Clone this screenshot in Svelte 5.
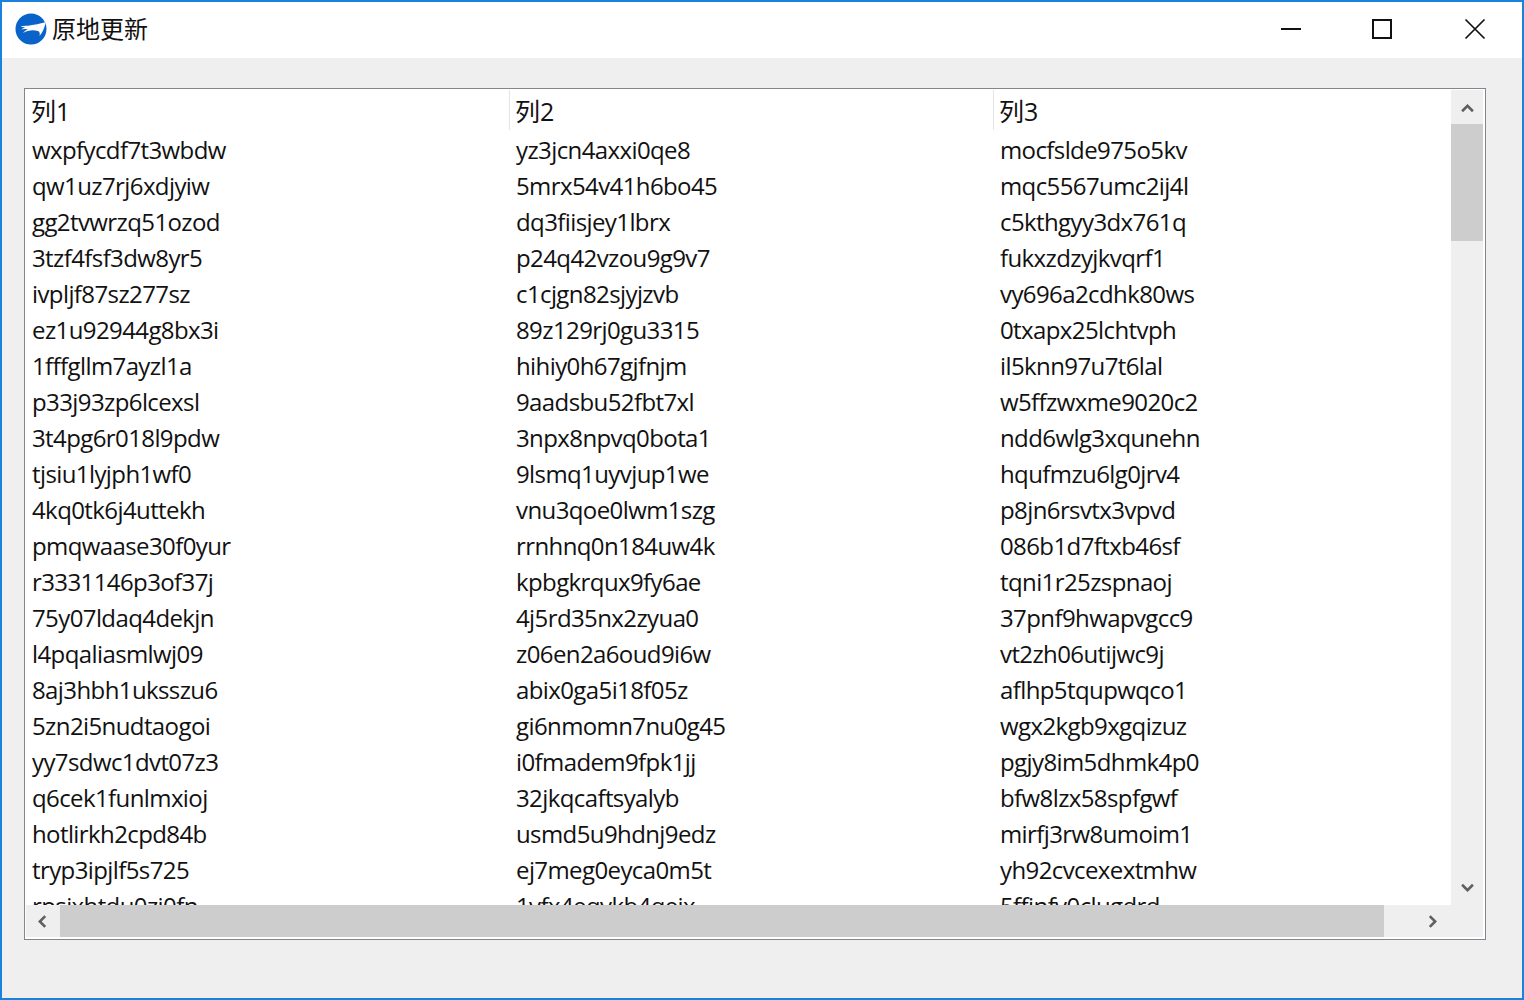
<script>
    const rows = `wxpfycdf7t3wbdw yz3jcn4axxi0qe8 mocfslde975o5kv
qw1uz7rj6xdjyiw 5mrx54v41h6bo45 mqc5567umc2ij4l
gg2tvwrzq51ozod dq3fiisjey1lbrx c5kthgyy3dx761q
3tzf4fsf3dw8yr5 p24q42vzou9g9v7 fukxzdzyjkvqrf1
ivpljf87sz277sz c1cjgn82sjyjzvb vy696a2cdhk80ws
ez1u92944g8bx3i 89z129rj0gu3315 0txapx25lchtvph
1fffgllm7ayzl1a hihiy0h67gjfnjm il5knn97u7t6lal
p33j93zp6lcexsl 9aadsbu52fbt7xl w5ffzwxme9020c2
3t4pg6r018l9pdw 3npx8npvq0bota1 ndd6wlg3xqunehn
tjsiu1lyjph1wf0 9lsmq1uyvjup1we hqufmzu6lg0jrv4
4kq0tk6j4uttekh vnu3qoe0lwm1szg p8jn6rsvtx3vpvd
pmqwaase30f0yur rrnhnq0n184uw4k 086b1d7ftxb46sf
r3331146p3of37j kpbgkrqux9fy6ae tqni1r25zspnaoj
75y07ldaq4dekjn 4j5rd35nx2zyua0 37pnf9hwapvgcc9
l4pqaliasmlwj09 z06en2a6oud9i6w vt2zh06utijwc9j
8aj3hbh1uksszu6 abix0ga5i18f05z aflhp5tqupwqco1
5zn2i5nudtaogoi gi6nmomn7nu0g45 wgx2kgb9xgqizuz
yy7sdwc1dvt07z3 i0fmadem9fpk1jj pgjy8im5dhmk4p0
q6cek1funlmxioj 32jkqcaftsyalyb bfw8lzx58spfgwf
hotlirkh2cpd84b usmd5u9hdnj9edz mirfj3rw8umoim1
tryp3ipjlf5s725 ej7meg0eyca0m5t yh92cvcexextmhw
rpsjxhtdu0zj0fn 1vfx4eqvkb4qejx 5ffjnfv0clugdrd`
        .split('\n')
        .map((line) => line.split(' '));
    const columns = ['列1', '列2', '列3'];
</script>

<div class="window">
    <header class="titlebar">
        <div class="title">
            <svg class="logo" viewBox="0 0 32 32" width="32" height="32">
                <circle cx="16" cy="16" r="15.5" fill="#0a63c8" />
                <path d="M6 13C12 13 18 12.500 30.500 9.300C30 14 28 19 24.500 23C25 20.500 25 19 23 18C18 16.500 13 17 8 20C9.500 18 11 17 13 16C10.500 16 8 16 6.500 16.500C7.500 15.500 8.500 15 10 14.500C8.500 14.300 7 14 6 13z" fill="#fff" />
            </svg>
            <span>原地更新</span>
        </div>
        <div class="controls">
            <button class="ctrl" aria-label="minimize">
                <svg viewBox="0 0 22 22" width="22" height="22"><path d="M0 11h20" stroke="#111" stroke-width="2" /></svg>
            </button>
            <button class="ctrl" aria-label="maximize">
                <svg viewBox="0 0 22 22" width="22" height="22"><rect x="2" y="2" width="18" height="18" fill="none" stroke="#111" stroke-width="2" /></svg>
            </button>
            <button class="ctrl close" aria-label="close">
                <svg viewBox="0 0 22 22" width="22" height="22"><path d="M1.500 1.500l19 19M20.500 1.500l-19 19" stroke="#111" stroke-width="1.700" /></svg>
            </button>
        </div>
    </header>

    <main class="content">
        <div class="grid-box">
            <div class="viewport">
                <div class="table-head">
                    {#each columns as col}
                        <div class="cell head">{col}</div>
                    {/each}
                </div>
                {#each rows as row}
                    <div class="row">
                        {#each row as value}
                            <div class="cell">{value}</div>
                        {/each}
                    </div>
                {/each}
            </div>

            <div class="vbar">
                <svg class="arrow up" viewBox="0 0 12 8" width="13" height="9"><path d="M1 6.500l5-5 5 5" fill="none" stroke="#606060" stroke-width="2.400" /></svg>
                <div class="track-v"><div class="thumb-v"></div></div>
                <svg class="arrow down" viewBox="0 0 12 8" width="13" height="9"><path d="M1 1.500l5 5 5-5" fill="none" stroke="#606060" stroke-width="2.400" /></svg>
            </div>

            <div class="hbar">
                <svg class="arrow left" viewBox="0 0 8 12" width="9" height="13"><path d="M6.500 1l-5 5 5 5" fill="none" stroke="#606060" stroke-width="2.400" /></svg>
                <div class="track-h"><div class="thumb-h"></div></div>
                <svg class="arrow right" viewBox="0 0 8 12" width="9" height="13"><path d="M1.500 1l5 5-5 5" fill="none" stroke="#606060" stroke-width="2.400" /></svg>
            </div>
            <div class="corner"></div>
        </div>
    </main>
</div>

<style>
    :global(body) {
        margin: 0;
    }

    .window {
        box-sizing: border-box;
        width: 1524px;
        height: 1000px;
        border: 2px solid #1a82dc;
        display: flex;
        flex-direction: column;
        background: #efefef;
        font-family: "Open Sans", "Noto Sans CJK SC", sans-serif;
        color: #111;
    }

    .titlebar {
        height: 56px;
        flex: none;
        background: #fff;
        display: flex;
        justify-content: space-between;
        align-items: center;
    }

    .title {
        display: flex;
        align-items: center;
        gap: 5px;
        padding-left: 13px;
        font-size: 24px;
        font-family: "Noto Sans CJK SC", sans-serif;
    }

    .title span {
        line-height: 32px;
        margin-top: -4px;
    }

    .logo {
        display: block;
        margin-top: -2px;
    }

    .controls {
        display: flex;
        align-items: center;
        gap: 68px;
        padding-right: 36px;
        padding-bottom: 2px;
    }

    .ctrl {
        padding: 0;
        border: 0;
        background: none;
        display: block;
        line-height: 0;
    }

    .close {
        margin-left: 3px;
    }

    .content {
        flex: 1;
        min-height: 0;
        padding: 30px 36px 58px 22px;
        display: flex;
    }

    .grid-box {
        flex: 1;
        box-sizing: border-box;
        background: #fff;
        border: 1px solid #82878f;
        padding: 1px 2px 2px 1px;
        display: grid;
        grid-template-columns: minmax(0, 1fr) 32px;
        grid-template-rows: minmax(0, 1fr) 32px;
        min-height: 0;
    }

    .viewport {
        overflow: hidden;
        min-height: 0;
        min-width: 0;
    }

    .table-head,
    .row {
        display: grid;
        grid-template-columns: repeat(3, 484px);
        height: 36px;
    }

    .table-head {
        height: 42px;
    }

    .cell {
        box-sizing: border-box;
        padding: 0 0 1px 6px;
        font-size: 24px;
        line-height: 35px;
        white-space: nowrap;
        letter-spacing: -0.6px;
    }

    .head {
        height: 40px;
        padding: 0 0 0 5px;
        font-size: 25px;
        line-height: 42px;
        letter-spacing: 0;
        border-right: 1px solid #e5e5e5;
    }

    .vbar,
    .hbar,
    .corner {
        background: #efefef;
    }

    .vbar {
        display: flex;
        flex-direction: column;
        align-items: center;
        justify-content: space-between;
        min-height: 0;
    }

    .arrow {
        flex: none;
    }

    .up {
        margin: 14px 0 11px;
    }

    .down {
        margin: 12px 0 13px;
    }

    .track-v {
        flex: 1;
        align-self: stretch;
    }

    .thumb-v {
        height: 117px;
        background: #cdcdcd;
    }

    .hbar {
        display: flex;
        align-items: center;
        min-width: 0;
    }

    .left {
        margin: 0 13px 0 12px;
    }

    .right {
        margin: 0 14px 0 11px;
    }

    .track-h {
        flex: 1;
        align-self: stretch;
    }

    .thumb-h {
        width: 1324px;
        height: 100%;
        background: #cdcdcd;
    }
</style>
